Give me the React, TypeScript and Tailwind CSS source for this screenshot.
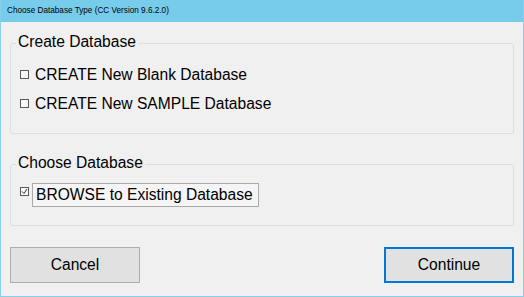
import React from "react";

const font = { fontFamily: '"Liberation Sans", Arial, sans-serif' };

const Box: React.FC<{ checked?: boolean }> = ({ checked }) => (
  <span className="w-[9px] h-[9px] border border-[#5a5a5a] bg-[#f8f8f8] flex items-center justify-center shrink-0">
    {checked && (
      <svg width="7" height="7" viewBox="0 0 7 7">
        <path d="M1 3.5 L3 5.5 L6 1" fill="none" stroke="#333" strokeWidth="1" />
      </svg>
    )}
  </span>
);

const Group: React.FC<{ title: string; className: string; children: React.ReactNode }> = ({
  title,
  className,
  children,
}) => (
  <div className={`relative border border-[#d9dfe4] rounded-[3px] ${className}`}>
    <span className="absolute left-[5px] top-[-10px] px-[2px] bg-[#f0f0f0] text-[15.6px] leading-none text-black">
      {title}
    </span>
    {children}
  </div>
);

export default function App() {
  return (
    <div
      className="w-[524px] h-[297px] flex flex-col border-x border-b border-[#86d0ec] bg-[#f0f0f0] text-black"
      style={font}
    >
      {/* title bar */}
      <div className="h-[22px] shrink-0 bg-[#78cceb] px-[6px] flex items-center text-[8.2px] text-black">
        Choose Database Type (CC Version 9.6.2.0)
      </div>

      <div className="flex-1 flex flex-col px-[9px]">
        <Group title="Create Database" className="mt-[21px] h-[91px] pt-[16px] pl-[9px]">
          <div className="flex items-center gap-[6px] h-[29px] text-[15.6px]">
            <Box />
            <span>CREATE New Blank Database</span>
          </div>
          <div className="flex items-center gap-[6px] h-[29px] text-[15.6px]">
            <Box />
            <span>CREATE New SAMPLE Database</span>
          </div>
        </Group>

        <Group title="Choose Database" className="mt-[30px] h-[62px] pt-[18px] pl-[9px]">
          <div className="flex items-start gap-[3px] text-[15.6px]">
            <span className="mt-[4px]">
              <Box checked />
            </span>
            <span className="h-[24px] leading-[22px] border border-[#a9a9a9] bg-[#f5f5f5] pl-[3px] pr-[5px]">
              BROWSE to Existing Database
            </span>
          </div>
        </Group>

        <div className="mt-[21px] flex justify-between">
          <button className="w-[130px] h-[36px] bg-[#e1e1e1] border border-[#adadad] text-[15.6px]">
            Cancel
          </button>
          <button className="w-[130px] h-[36px] bg-[#e1e1e1] border-2 border-[#0078d7] text-[15.6px]">
            Continue
          </button>
        </div>
      </div>
    </div>
  );
}
